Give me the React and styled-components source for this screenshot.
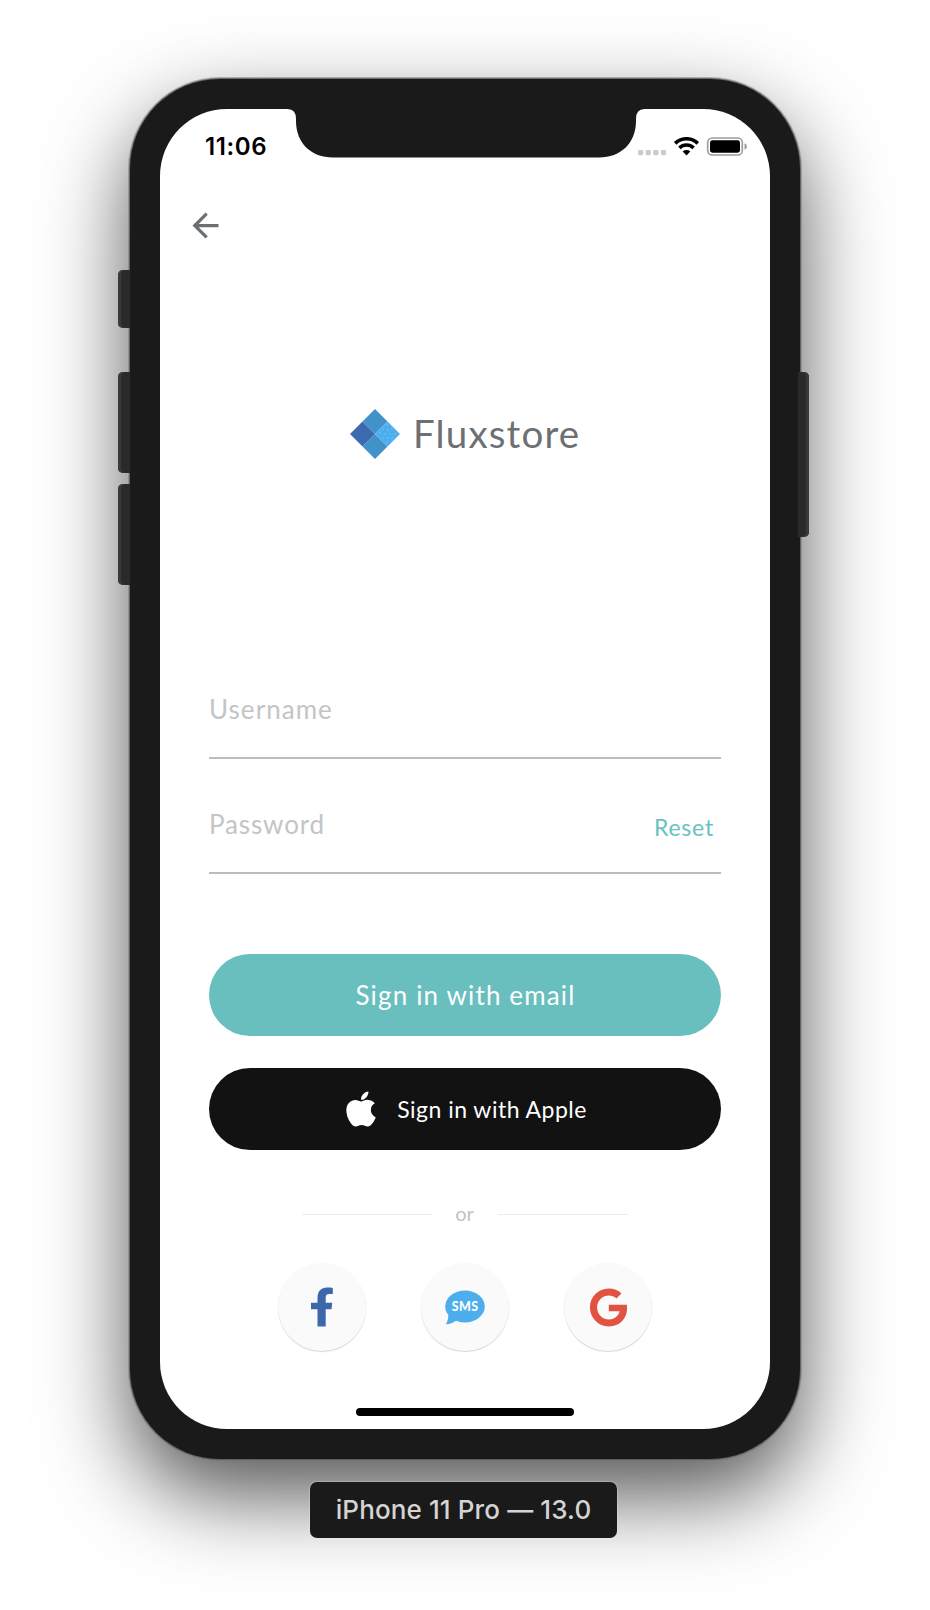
import React from "react";
import styled, { createGlobalStyle } from "styled-components";
import { FaApple, FaGoogle } from "react-icons/fa";
import { MdArrowBack } from "react-icons/md";

const GlobalStyle = createGlobalStyle`
  * { box-sizing: border-box; }
  body { margin: 0; background: #fff; }
`;

const Stage = styled.main`
  display: flex;
  flex-direction: column;
  align-items: center;
  width: 930px;
  height: 1610px;
  padding-top: 79px;
  overflow: hidden;
  background: #fff;
  font-family: Lato, "Liberation Sans", sans-serif;
`;

const Phone = styled.div`
  position: relative;
  width: 670px;
  height: 1380px;
  padding: 30px;
  border-radius: 90px;
  background: #1a1a1a;
  box-shadow: 0 0 0 1px rgba(85, 85, 85, 0.75), 0 0 0 2px rgba(120, 120, 120, 0.5),
    0 36px 86px rgba(0, 0, 0, 0.68);
`;

const SideButton = styled.i`
  position: absolute;
  top: ${(p) => p.$top}px;
  ${(p) => (p.$right ? "right: -9px;" : "left: -12px;")}
  width: ${(p) => (p.$right ? 11 : 12)}px;
  height: ${(p) => p.$height}px;
  border-radius: ${(p) => (p.$right ? "0 5px 5px 0" : "5px 0 0 5px")};
  background: #2a2a2a;
  box-shadow: inset ${(p) => (p.$right ? -3 : 3)}px 0 0 #3a3a3a;
`;

const Notch = styled.svg`
  position: absolute;
  top: 29px;
  left: 157px;
  width: 358px;
  height: 50px;
`;

const Screen = styled.div`
  display: flex;
  flex-direction: column;
  height: 1320px;
  border-radius: 67px;
  background: #fff;
`;

const StatusBar = styled.div`
  display: flex;
  align-items: center;
  justify-content: space-between;
  height: 75px;
  padding: 0 23px 0 45px;
`;

const Clock = styled.span`
  padding-top: 1px;
  font: 600 24px/30px Inter, sans-serif;
  letter-spacing: 0.6px;
  color: #000;
`;

const Indicators = styled.svg`
  width: 110px;
  height: 20px;
`;

const NavBar = styled.nav`
  height: 39px;
  margin-top: 22px;
  padding-left: 26px;
  color: #6b6f73;
  svg { display: block; }
`;

const Brand = styled.div`
  display: flex;
  align-items: center;
  gap: 13px;
  height: 50px;
  margin-top: 164px;
  padding-left: 190px;
`;

const BrandName = styled.span`
  padding-bottom: 2px;
  font-size: 38.5px;
  line-height: 48px;
  letter-spacing: 1.15px;
  color: #6d7072;
`;

const Form = styled.form`
  display: flex;
  flex-direction: column;
  margin-top: 185px;
  padding: 0 49px;
`;

const Field = styled.div`
  display: flex;
  align-items: flex-end;
  justify-content: space-between;
  height: 115px;
  padding: 0 7px 32px 0;
  border-bottom: 2px solid #bcbebe;
`;

const FieldLabel = styled.label`
  font-size: 26px;
  line-height: 32px;
  letter-spacing: ${(p) => p.$spacing}px;
  color: #c3c5c5;
`;

const ResetLink = styled.a`
  margin-bottom: -1px;
  font-size: 23px;
  line-height: 28px;
  letter-spacing: 0.8px;
  color: #68c2c2;
`;

const PillButton = styled.button`
  display: flex;
  align-items: center;
  justify-content: center;
  gap: 21px;
  height: 82px;
  margin-top: ${(p) => (p.$apple ? 32 : 80)}px;
  padding: 0 0 0 ${(p) => (p.$apple ? 3 : 1)}px;
  border: 0;
  border-radius: 41px;
  background: ${(p) => (p.$apple ? "#121212" : "#69bebe")};
  color: #fff;
  font-family: inherit;
  font-size: ${(p) => (p.$apple ? 23 : 26)}px;
  font-weight: 400;
  letter-spacing: ${(p) => (p.$apple ? 0.48 : 1.15)}px;
  svg { width: 30px; height: 40px; }
`;

const Divider = styled.div`
  display: flex;
  align-items: center;
  justify-content: space-between;
  align-self: center;
  width: 326px;
  height: 24px;
  margin-top: 52px;
  color: #c1c3c3;
  font-size: 20px;
  line-height: 24px;
`;

const OrText = styled.span`
  padding: 0 1px 2px 0;
`;

const Rule = styled.span`
  width: 130px;
  height: 1px;
  background: #ececec;
`;

const SocialRow = styled.div`
  display: flex;
  justify-content: center;
  gap: 55px;
  margin-top: 37px;
`;

const SocialButton = styled.button`
  display: flex;
  align-items: center;
  justify-content: center;
  width: 88px;
  height: 88px;
  padding: 0;
  border: 0;
  border-radius: 50%;
  background: #fafafa;
  box-shadow: 0 1px 1px rgba(0, 0, 0, 0.17);
  color: #e25241;
`;

const HomeIndicator = styled.div`
  align-self: center;
  width: 218px;
  height: 8px;
  margin-top: 57px;
  border-radius: 4px;
  background: #000;
`;

const DeviceLabel = styled.div`
  position: relative;
  width: 307px;
  height: 56px;
  margin: 23px 3px 0 0;
  border-radius: 7px;
  background: #1a1a1a;
  box-shadow: 0 0 0 1px rgba(255, 255, 255, 0.2);
  color: #d4d4d4;
  font: 500 26px/56px Inter, sans-serif;
  letter-spacing: 0.12px;
  text-align: center;
  white-space: nowrap;
`;

function StatusIcons() {
  return (
    <Indicators viewBox="0 0 110 20">
      {[1, 8.7, 16.3, 23.9].map((x) => (
        <rect key={x} x={x} y="13" width="5.2" height="5.2" rx="1.4" fill="#cbcbcb" />
      ))}
      <g fill="none" stroke="#000" strokeWidth="3.6">
        <path d="M38.2 6.4a16.1 16.1 0 0 1 22.6 0" />
        <path d="M42.4 10.9a10.1 10.1 0 0 1 14.2 0" />
      </g>
      <path d="M45.7 14.4a5.6 5.6 0 0 1 7.6 0l-3.8 4.1z" fill="#000" />
      <rect x="70.7" y="1" width="34.6" height="17" rx="4.6" fill="none" stroke="#9a9c9c" strokeWidth="1.6" />
      <rect x="73" y="3.3" width="30" height="12.4" rx="2.4" fill="#000" />
      <path d="M107.5 6.2q2.400 1 2.400 3.300t-2.400 3.300z" fill="#9a9c9c" />
    </Indicators>
  );
}

function BrandMark() {
  return (
    <svg width="50" height="50" viewBox="0 0 50 50">
      <path d="M25 0 37.5 12.5 25 25 12.5 12.5z" fill="#4192c9" />
      <path d="M25 25 37.5 37.5 25 50 12.5 37.5z" fill="#4192c9" />
      <path d="M12.5 12.5 25 25 12.5 37.5 0 25z" fill="#3c69b0" />
      <path d="M37.5 12.5 50 25 37.5 37.5 25 25z" fill="#4caeed" />
      <g fill="#8bcaf0">
        {[[37, 16], [33, 20], [38, 21], [42, 20], [30, 24], [35, 25], [40, 25], [45, 25], [33, 29], [38, 29], [42, 29], [37, 33]].map(
          ([x, y]) => <circle key={`${x}-${y}`} cx={x} cy={y} r=".7" />
        )}
      </g>
    </svg>
  );
}

function FacebookIcon() {
  return (
    <svg width="22" height="40" viewBox="0 0 22 40">
      <path
        d="M6.500 39.500V22.200H0v-6.500h6.500V11C6.500 4 10.200.5 16 .5c2.300 0 4.500.2 5.800.4v6h-3.500c-2.900 0-3.600 1.400-3.600 3.900v4.900h6.500l-.7 6.500h-5.800v17.300z"
        fill="#3c67ad"
      />
    </svg>
  );
}

function SmsIcon() {
  return (
    <svg width="40" height="35" viewBox="0 0 40 35">
      <ellipse cx="20" cy="16.5" rx="19.800" ry="15.900" fill="#4caeed" />
      <path d="M3 25q1 4-2.200 9.300 6.800-.3 11-4.300z" fill="#4caeed" />
      <text
        x="20.2"
        y="20.800"
        textAnchor="middle"
        fill="#fff"
        fontFamily="Lato, sans-serif"
        fontSize="12.400"
        fontWeight="900"
        letterSpacing="0.5"
      >
        SMS
      </text>
    </svg>
  );
}

export default function App() {
  return (
    <>
      <GlobalStyle />
      <Stage>
        <Phone>
          <SideButton $top={191} $height={58} />
          <SideButton $top={293} $height={101} />
          <SideButton $top={405} $height={101} />
          <SideButton $right $top={293} $height={165} />
          <Screen>
            <StatusBar>
              <Clock>11:06</Clock>
              <StatusIcons />
            </StatusBar>
            <NavBar>
              <MdArrowBack size={39} />
            </NavBar>
            <Brand>
              <BrandMark />
              <BrandName>Fluxstore</BrandName>
            </Brand>
            <Form>
              <Field>
                <FieldLabel $spacing={1.05}>Username</FieldLabel>
              </Field>
              <Field>
                <FieldLabel $spacing={0.85}>Password</FieldLabel>
                <ResetLink>Reset</ResetLink>
              </Field>
              <PillButton type="button">Sign in with email</PillButton>
              <PillButton type="button" $apple>
                <FaApple />
                <span>Sign in with Apple</span>
              </PillButton>
            </Form>
            <Divider>
              <Rule />
              <OrText>or</OrText>
              <Rule />
            </Divider>
            <SocialRow>
              <SocialButton aria-label="Facebook">
                <FacebookIcon />
              </SocialButton>
              <SocialButton aria-label="Text message">
                <SmsIcon />
              </SocialButton>
              <SocialButton aria-label="Google">
                <FaGoogle size={39} />
              </SocialButton>
            </SocialRow>
            <HomeIndicator />
          </Screen>
          <Notch viewBox="0 0 358 50">
            <path
              d="M0 0H358V1H357.5Q349 1 349 11V14C348.500 35 334 49.500 312 49.500H46C24 49.500 9.500 35 9 14V11Q9 1 .500 1H0z"
              fill="#1a1a1a"
            />
          </Notch>
        </Phone>
        <DeviceLabel>iPhone 11 Pro — 13.0</DeviceLabel>
      </Stage>
    </>
  );
}
